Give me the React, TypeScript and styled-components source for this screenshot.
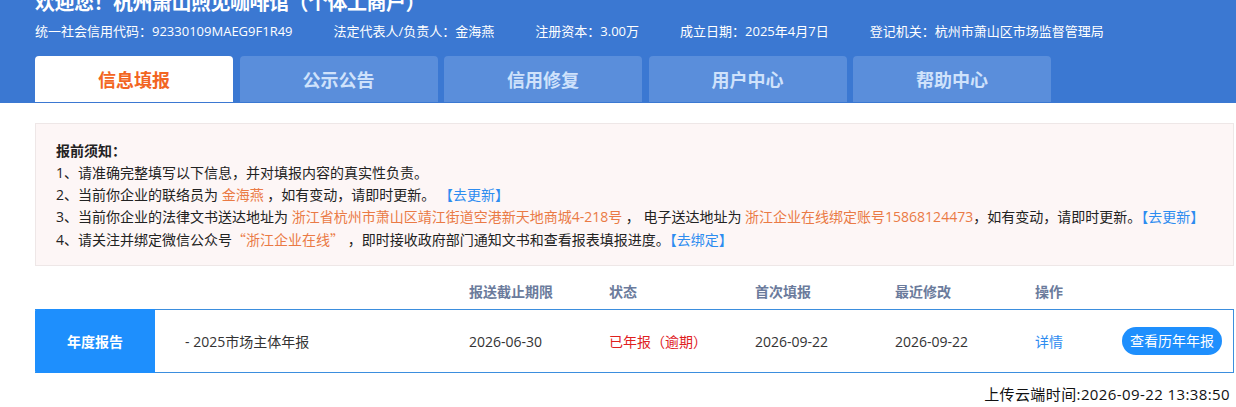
import React from "react";
import styled, { createGlobalStyle } from "styled-components";

const Global = createGlobalStyle`
  html, body { margin: 0; padding: 0; background: #fff; }
  body {
    font-family: "Open Sans", "Noto Sans CJK SC", sans-serif;
    color: #333;
    overflow: hidden;
  }
`;

const Page = styled.div`
  width: 1236px;
  height: 407px;
  overflow: hidden;
`;

const Header = styled.header`
  background: #3b78d2;
  height: 103px;
  padding: 0 35px;
  box-sizing: border-box;
  display: flex;
  flex-direction: column;
`;

const Title = styled.h1`
  margin: -10px 0 0;
  font-size: 20px;
  line-height: 26px;
  font-weight: 700;
  letter-spacing: -0.5px;
  color: #fff;
  white-space: nowrap;
`;

const InfoLine = styled.div`
  display: flex;
  gap: 41px;
  margin-top: 6px;
  font-size: 13px;
  line-height: 18px;
  color: #fff;
  white-space: nowrap;
`;

const Tabs = styled.nav`
  display: flex;
  gap: 6.5px;
  margin-top: 16px;
`;

const Tab = styled.div<{ $active?: boolean }>`
  width: 198px;
  height: 46px;
  border-radius: 4px 4px 0 0;
  display: flex;
  align-items: center;
  justify-content: center;
  font-size: 18px;
  font-weight: 700;
  background: ${(p) => (p.$active ? "#fff" : "#5a8edb")};
  color: ${(p) => (p.$active ? "#f26522" : "#cfe2fb")};
`;

const Body = styled.main`
  padding: 20px 2px 0 35px;
`;

const Notice = styled.section`
  background: #fdf6f6;
  border: 1px solid #eee7e7;
  padding: 16px 20px 14px;
  font-size: 14px;
  line-height: 22px;
  color: #222;
  white-space: nowrap;
`;

const NoticeTitle = styled.div`
  font-weight: 700;
`;

const Hi = styled.span`
  color: #ea7a45;
`;

/* Chinese full-width quotation marks */
const Quote = styled.span`
  font-family: "Noto Sans CJK SC", sans-serif;
`;

const Link = styled.span`
  color: #2d8cf0;
`;

const Grid = styled.div`
  display: grid;
  grid-template-columns: 120px 314px 140px 146px 140px 140px 87px 1fr;
  align-items: center;
`;

const HeadRow = styled(Grid)`
  margin-top: 11px;
  height: 32px;
  padding-bottom: 4px;
  box-sizing: border-box;
  font-size: 14px;
  font-weight: 700;
  color: #6b7b9c;
`;

const DataRow = styled(Grid)`
  height: 64px;
  border: 1px solid #3b8ede;
  border-left: none;
  box-sizing: border-box;
  font-size: 14px;
  color: #333;
`;

const Label = styled.div`
  align-self: stretch;
  margin: -1px 0;
  background: #1e8ffd;
  color: #fff;
  font-weight: 700;
  font-size: 14px;
  display: flex;
  align-items: center;
  justify-content: center;
  border-radius: 2px 0 0 2px;
`;

const Cell = styled.div<{ $color?: string; $indent?: number }>`
  color: ${(p) => p.$color ?? "inherit"};
  padding-left: ${(p) => p.$indent ?? 0}px;
  white-space: nowrap;
`;

const PillButton = styled.button`
  justify-self: start;
  height: 28px;
  padding: 0 8px;
  border: none;
  border-radius: 14px;
  background: #1e8ffd;
  color: #fff;
  font-family: inherit;
  font-size: 14px;
  line-height: 28px;
  cursor: pointer;
`;

const Footer = styled.div`
  text-align: right;
  padding-right: 4px;
  margin-top: 10px;
  font-size: 15px;
  line-height: 22px;
  letter-spacing: 0.4px;
  color: #111;
`;

const info = [
  "统一社会信用代码：92330109MAEG9F1R49",
  "法定代表人/负责人：金海燕",
  "注册资本：3.00万",
  "成立日期：2025年4月7日",
  "登记机关：杭州市萧山区市场监督管理局",
];

const tabs = ["信息填报", "公示公告", "信用修复", "用户中心", "帮助中心"];

export default function App() {
  return (
    <Page>
      <Global />
      <Header>
        <Title>欢迎您！杭州萧山煦见咖啡馆（个体工商户）</Title>
        <InfoLine>
          {info.map((t) => (
            <span key={t}>{t}</span>
          ))}
        </InfoLine>
        <Tabs>
          {tabs.map((t, i) => (
            <Tab key={t} $active={i === 0}>
              {t}
            </Tab>
          ))}
        </Tabs>
      </Header>
      <Body>
        <Notice>
          <NoticeTitle>报前须知：</NoticeTitle>
          <div>1、请准确完整填写以下信息，并对填报内容的真实性负责。</div>
          <div>
            2、当前你企业的联络员为 <Hi>金海燕</Hi> ，如有变动，请即时更新。 <Link>【去更新】</Link>
          </div>
          <div>
            3、当前你企业的法律文书送达地址为 <Hi>浙江省杭州市萧山区靖江街道空港新天地商城4-218号</Hi> ，
            电子送达地址为 <Hi>浙江企业在线绑定账号15868124473</Hi>，如有变动，请即时更新。<Link>【去更新】</Link>
          </div>
          <div>
            4、请关注并绑定微信公众号
            <Hi>
              <Quote>“</Quote>浙江企业在线<Quote>”</Quote>
            </Hi>{" "}
            ，即时接收政府部门通知文书和查看报表填报进度。<Link>【去绑定】</Link>
          </div>
        </Notice>
        <HeadRow>
          <span />
          <span />
          <span>报送截止期限</span>
          <span>状态</span>
          <span>首次填报</span>
          <span>最近修改</span>
          <span>操作</span>
          <span />
        </HeadRow>
        <DataRow>
          <Label>年度报告</Label>
          <Cell $indent={30}>- 2025市场主体年报</Cell>
          <Cell>2026-06-30</Cell>
          <Cell $color="#e0201e">已年报（逾期）</Cell>
          <Cell>2026-09-22</Cell>
          <Cell>2026-09-22</Cell>
          <Cell $color="#2d8cf0">详情</Cell>
          <PillButton>查看历年年报</PillButton>
        </DataRow>
        <Footer>上传云端时间:2026-09-22 13:38:50</Footer>
      </Body>
    </Page>
  );
}
